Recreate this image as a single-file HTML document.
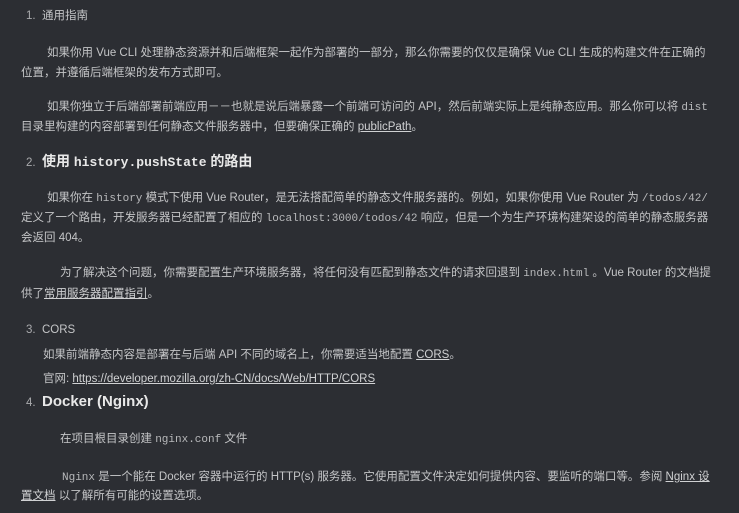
<!DOCTYPE html>
<html><head><meta charset="utf-8"><style>
html,body{margin:0;padding:0;width:739px;height:513px;background:#2c2e33;overflow:hidden}
body{font-family:"Liberation Sans","Noto Sans CJK SC",sans-serif;font-size:11.5px;color:#c4c5c7;position:relative}
.l{position:absolute;white-space:nowrap;line-height:16px}
code{font-family:"Liberation Mono","Noto Sans CJK SC",monospace;font-size:11px;color:#b8b9bb}
u{text-decoration:underline;color:#d0d1d3}
.h{font-size:14px;font-weight:bold;color:#e8e8e8}
.n{color:#a9aaad}
</style></head><body>
<div class="l" style="left:26px;top:8px"><span class="n">1.</span>&nbsp; 通用指南</div>
<div class="l" style="left:47px;top:45px">如果你用 Vue CLI 处理静态资源并和后端框架一起作为部署的一部分，那么你需要的仅仅是确保 Vue CLI 生成的构建文件在正确的</div>
<div class="l" style="left:21px;top:65px">位置，并遵循后端框架的发布方式即可。</div>
<div class="l" style="left:47px;top:99px">如果你独立于后端部署前端应用－－也就是说后端暴露一个前端可访问的 API，然后前端实际上是纯静态应用。那么你可以将 <code>dist</code></div>
<div class="l" style="left:21px;top:119px">目录里构建的内容部署到任何静态文件服务器中，但要确保正确的 <u>publicPath</u>。</div>
<div class="l" style="left:26px;top:153px"><span class="n">2.</span>&nbsp; <span class="h">使用 <code style="font-size:13px;color:#e8e8e8">history.pushState</code> 的路由</span></div>
<div class="l" style="left:47px;top:190px">如果你在 <code>history</code> 模式下使用 Vue Router，是无法搭配简单的静态文件服务器的。例如，如果你使用 Vue Router 为 <code>/todos/42/</code></div>
<div class="l" style="left:21px;top:210px">定义了一个路由，开发服务器已经配置了相应的 <code>localhost:3000/todos/42</code> 响应，但是一个为生产环境构建架设的简单的静态服务器</div>
<div class="l" style="left:21px;top:230px">会返回 404。</div>
<div class="l" style="left:60px;top:265px">为了解决这个问题，你需要配置生产环境服务器，将任何没有匹配到静态文件的请求回退到 <code>index.html</code> 。Vue Router 的文档提</div>
<div class="l" style="left:21px;top:286px">供了<u>常用服务器配置指引</u>。</div>
<div class="l" style="left:26px;top:322px"><span class="n">3.</span>&nbsp; CORS</div>
<div class="l" style="left:43px;top:347px">如果前端静态内容是部署在与后端 API 不同的域名上，你需要适当地配置 <u>CORS</u>。</div>
<div class="l" style="left:43px;top:371px">官网: <u>https://developer.mozilla.org/zh-CN/docs/Web/HTTP/CORS</u></div>
<div class="l" style="left:26px;top:394px"><span class="n">4.</span>&nbsp; <span class="h" style="font-size:15px">Docker (Nginx)</span></div>
<div class="l" style="left:60px;top:431px">在项目根目录创建 <code>nginx.conf</code> 文件</div>
<div class="l" style="left:62px;top:469px"><code>Nginx</code> 是一个能在 Docker 容器中运行的 HTTP(s) 服务器。它使用配置文件决定如何提供内容、要监听的端口等。参阅 <u>Nginx 设</u></div>
<div class="l" style="left:21px;top:488px"><u>置文档</u> 以了解所有可能的设置选项。</div>
</body></html>
